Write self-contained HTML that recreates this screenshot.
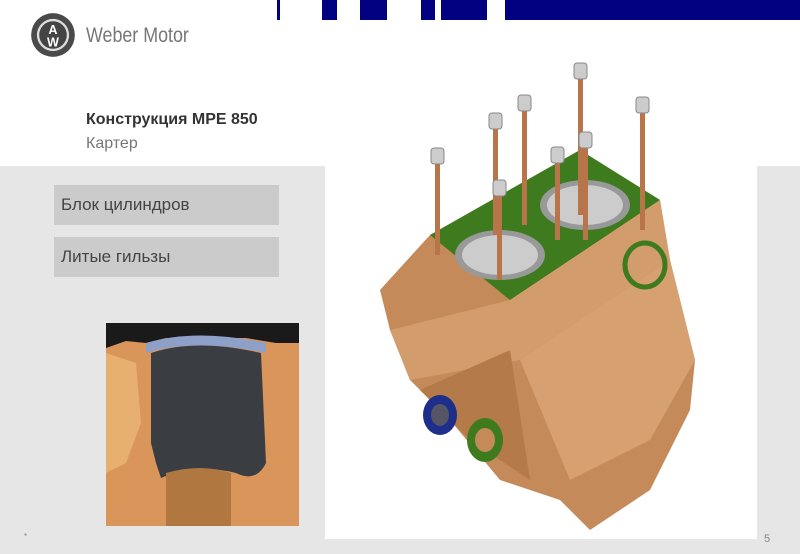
<!DOCTYPE html>
<html><head><meta charset="utf-8"><style>
*{margin:0;padding:0}
body{width:800px;height:554px;position:relative;background:#fff;font-family:"Liberation Sans","DejaVu Sans",sans-serif;overflow:hidden}
.b{position:absolute;top:0;height:20px;background:#000080}
.g{position:absolute;background:#e6e6e6}
.btn{position:absolute;left:54px;width:225px;height:40px;background:#cbcbcb;color:#444;font-size:17px;line-height:40px;padding-left:7px;box-sizing:border-box}
</style></head><body>
<div class="b" style="left:277px;width:3px"></div>
<div class="b" style="left:322px;width:15px"></div>
<div class="b" style="left:360px;width:27px"></div>
<div class="b" style="left:421px;width:14px"></div>
<div class="b" style="left:441px;width:46px"></div>
<div class="b" style="left:505px;width:295px"></div>
<svg style="position:absolute;left:30px;top:12px" width="46" height="46" viewBox="0 0 40 40"><circle cx="20" cy="20" r="19" fill="#4a4a4a"/><circle cx="20" cy="20" r="14" fill="#ddd"/><circle cx="20" cy="20" r="12" fill="#444"/><text x="20" y="19" font-size="11" fill="#fff" text-anchor="middle" font-family="Liberation Sans" font-weight="bold">A</text><text x="20" y="30" font-size="11" fill="#fff" text-anchor="middle" font-family="Liberation Sans" font-weight="bold">W</text></svg>
<div style="position:absolute;left:86px;top:24px;font-size:21px;color:#777;transform:scaleX(0.85);transform-origin:left;white-space:nowrap">Weber Motor</div>
<div style="position:absolute;left:86px;top:111px;font-size:16px;font-weight:bold;color:#333">Конструкция MPE 850</div>
<div style="position:absolute;left:86px;top:135px;font-size:16px;color:#777">Картер</div>
<div class="g" style="left:0;top:166px;width:325px;height:388px"></div>
<div class="g" style="left:757px;top:166px;width:43px;height:388px"></div>
<div class="g" style="left:0;top:539px;width:800px;height:15px"></div>
<div class="btn" style="top:185px">Блок цилиндров</div>
<div class="btn" style="top:237px">Литые гильзы</div>
<svg style="position:absolute;left:106px;top:323px" width="193" height="203" viewBox="0 0 193 203">
<rect width="193" height="203" fill="#d9955a"/>
<rect width="193" height="12" fill="#111"/>
<path d="M0 25 L20 18 L40 20 L60 15 L140 15 L170 20 L193 20 L193 0 L0 0Z" fill="#1a1a1a"/>
<path d="M40 20 Q90 5 160 20 L160 30 Q90 15 40 30Z" fill="#8fa0c8"/>
<path d="M45 30 Q90 15 155 30 L160 140 Q150 160 130 150 Q90 140 55 155 L50 140 L45 120Z" fill="#3a3d42"/>
<path d="M0 30 L30 40 L35 100 L20 140 L0 150Z" fill="#e8b070"/>
<path d="M60 150 Q95 140 125 150 L125 203 L60 203Z" fill="#b07840"/>
</svg>
<svg style="position:absolute;left:370px;top:60px" width="340" height="470" viewBox="0 0 340 470">
<path d="M10 230 L60 175 L210 90 L290 140 L300 200 L325 300 L320 350 L280 430 L220 470 L190 440 L130 420 L80 360 L40 320 L20 270Z" fill="#c58a5a"/>
<path d="M60 175 L210 90 L290 140 L140 240Z" fill="#3e7a1e"/>
<path d="M20 270 L140 240 L290 140 L300 200 L150 300 L40 320Z" fill="#d39c6c"/>
<path d="M150 300 L300 200 L325 300 L280 380 L200 420Z" fill="#d6a070"/>
<path d="M50 330 L140 290 L160 420 L100 380Z" fill="#b47a4a"/>
<ellipse cx="130" cy="195" rx="45" ry="25" fill="#999"/><ellipse cx="130" cy="195" rx="38" ry="20" fill="#ccc"/>
<ellipse cx="215" cy="145" rx="45" ry="25" fill="#999"/><ellipse cx="215" cy="145" rx="38" ry="20" fill="#ccc"/>
<ellipse cx="70" cy="355" rx="17" ry="20" fill="#1d2f8a"/><ellipse cx="70" cy="355" rx="9" ry="11" fill="#556"/>
<ellipse cx="115" cy="380" rx="18" ry="22" fill="#3e7a1e"/><ellipse cx="115" cy="380" rx="10" ry="12" fill="#c58a5a"/>
<ellipse cx="275" cy="205" rx="20" ry="22" fill="none" stroke="#3e7a1e" stroke-width="5"/>
<g fill="#b9754a"><rect x="65" y="95" width="5" height="100"/><rect x="123" y="65" width="5" height="110"/><rect x="152" y="45" width="5" height="120"/><rect x="208" y="15" width="5" height="140"/><rect x="270" y="50" width="5" height="120"/><rect x="185" y="100" width="5" height="80"/><rect x="213" y="85" width="5" height="95"/><rect x="127" y="130" width="5" height="90"/></g>
<g fill="#ccc" stroke="#888"><rect x="61" y="88" width="13" height="16" rx="3"/><rect x="119" y="53" width="13" height="16" rx="3"/><rect x="148" y="35" width="13" height="16" rx="3"/><rect x="204" y="3" width="13" height="16" rx="3"/><rect x="266" y="37" width="13" height="16" rx="3"/><rect x="181" y="87" width="13" height="16" rx="3"/><rect x="209" y="72" width="13" height="16" rx="3"/><rect x="123" y="120" width="13" height="16" rx="3"/></g>
</svg>
<div style="position:absolute;left:24px;top:532px;font-size:8px;color:#888">*</div>
<div style="position:absolute;left:764px;top:533px;font-size:11px;color:#888">5</div>
</body></html>
